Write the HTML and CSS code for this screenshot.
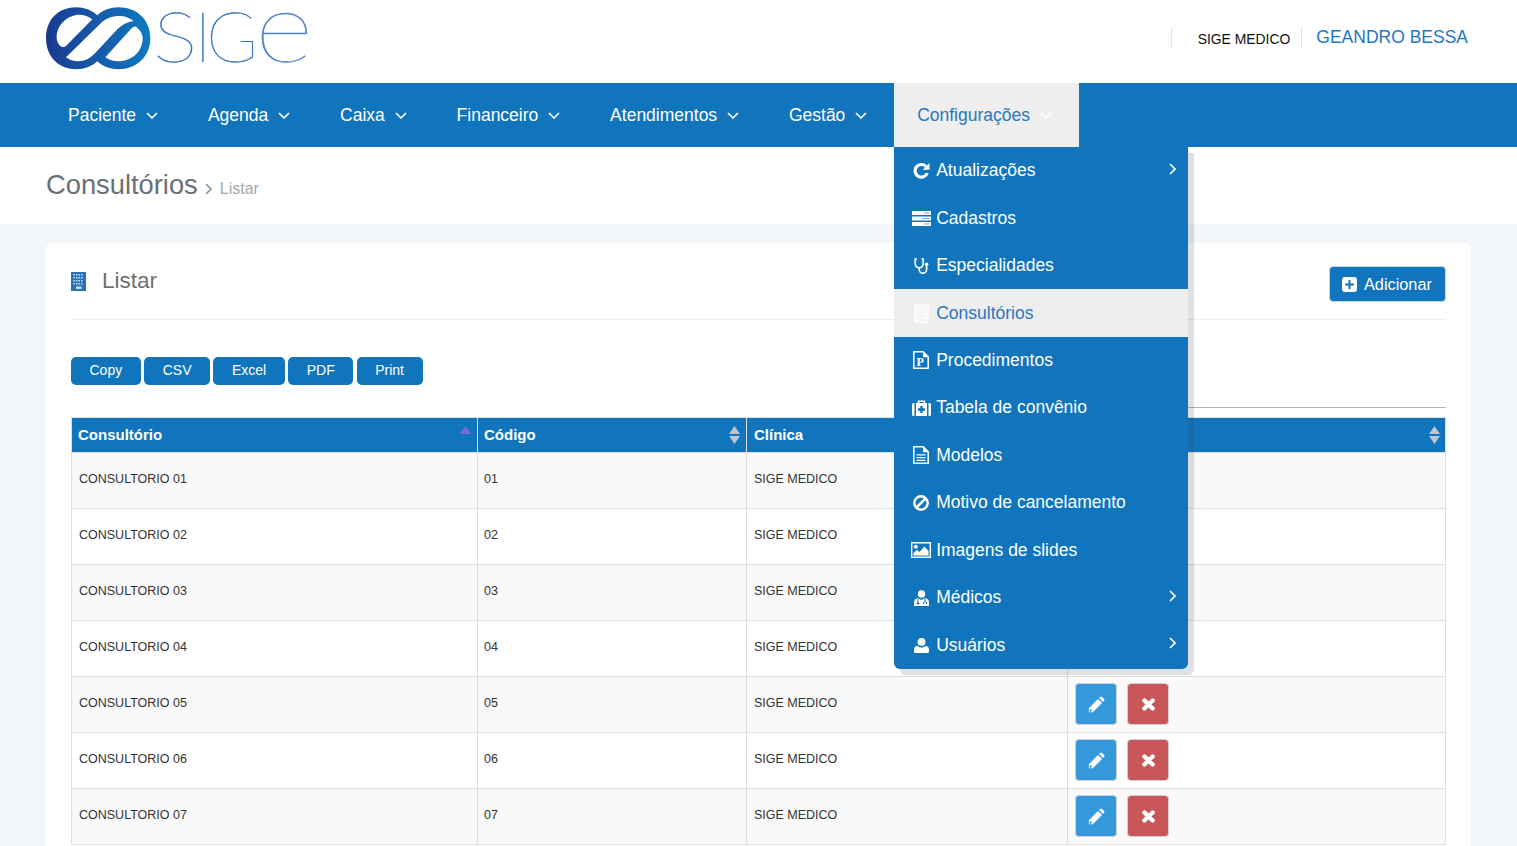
FILE: index.html
```html
<!DOCTYPE html>
<html lang="pt-BR">
<head>
<meta charset="utf-8">
<title>SIGE - Consultórios</title>
<link rel="stylesheet" href="styles.css">
</head>
<body>
<svg class="sprite" aria-hidden="true">
  <defs>
    <symbol id="i-pencil" viewBox="0 0 17 17">
      <path fill="#fff" d="M0.8 12.2 10 3l4 4-9.2 9.2H0.8zM11.1 1.9l.9-.9q1-1 2 0l2 2q1 1 0 2l-.9.9z"/>
      <path fill="#3498db" d="M2.2 12.9l1.9 1.9-.9.9H2l-.7-.7v-1.200z"/>
    </symbol>
    <symbol id="i-x" viewBox="0 0 13 13">
      <path stroke="#fff" stroke-width="4.200" stroke-linecap="round" d="M2.400 2.400l8.200 8.200M10.600 2.400l-8.200 8.200"/>
    </symbol>
    <symbol id="i-down" viewBox="0 0 12 7">
      <path fill="none" stroke="currentColor" stroke-width="1.700" d="M1 1l5 5 5-5"/>
    </symbol>
    <symbol id="i-right" viewBox="0 0 7 12">
      <path fill="none" stroke="currentColor" stroke-width="1.700" d="M1 1l5 5-5 5"/>
    </symbol>
    <symbol id="i-sort" viewBox="0 0 11 18">
      <path fill="#b9c7d6" d="M5.500 0L11 8H0zM5.500 18L0 10h11z"/>
    </symbol>
    <symbol id="i-building" viewBox="0 0 15 19">
      <path fill="currentColor" d="M0 0h15v19H0z"/>
      <path fill="var(--dot)" d="M2.500 2h1.500v1.500H2.500zM5 2h1.500v1.500H5zM7.500 2h1.500v1.500H7.500zM10 2h1.500v1.500H10zM2.500 5h1.500v1.500H2.500zM5 5h1.500v1.500H5zM7.500 5h1.500v1.500H7.500zM10 5h1.500v1.500H10zM2.500 8h1.500v1.500H2.500zM5 8h1.500v1.500H5zM7.500 8h1.500v1.500H7.500zM10 8h1.500v1.500H10zM2.500 11h1.500v1.500H2.500zM5 11h1.500v1.500H5zM7.500 11h1.500v1.500H7.500zM10 11h1.500v1.500H10zM5 14.500h5.500V17H5z"/>
    </symbol>
  </defs>
</svg>

<header class="topbar">
  <a class="logo" href="#">
    <svg class="logo-mark" viewBox="0 0 360 228" width="120" height="76" aria-hidden="true">
      <defs>
        <linearGradient id="logo-grad" x1="0" x2="1" y1="0" y2="0">
          <stop offset="0" stop-color="#1b3a92"/>
          <stop offset="1" stop-color="#0f7abf"/>
        </linearGradient>
      </defs>
      <path fill="url(#logo-grad)" fill-rule="evenodd" d="M110 22C132 22 155 30 172 46C188 30 212 22 235 22C290 22 331 58 331 115C331 170 290 208 235 208C212 208 188 200 172 184C155 200 132 208 110 208C55 208 18 170 18 115C18 58 55 22 110 22ZM50 108C52 72 85 44 118 44C132 44 147 50 157 58L78 138C72 143 64 142 58 135C52 128 49 118 50 108ZM78 172L180 72C195 56 215 48 240 48C255 48 270 54 281 63C262 66 245 74 232 88L165 160C150 175 135 184 115 184C100 184 88 180 78 172ZM196 172L270 90C276 82 284 78 288 80C300 90 308 100 308 115C308 155 275 184 235 184C220 184 207 180 196 172Z"/>
    </svg>
    <span class="logo-word"><span class="logo-s">S</span><span class="logo-i">I</span><span class="logo-g">G</span><span class="logo-e">e</span></span>
  </a>
  <div class="top-user">
    <span class="top-clinic">SIGE MEDICO</span>
    <a class="top-name" href="#">GEANDRO BESSA</a>
  </div>
</header>

<nav class="mainnav">
  <ul class="nav-list">
    <li class="nav-item"><a href="#">Paciente</a><svg class="caret"><use href="#i-down"/></svg></li>
    <li class="nav-item"><a href="#">Agenda</a><svg class="caret"><use href="#i-down"/></svg></li>
    <li class="nav-item"><a href="#">Caixa</a><svg class="caret"><use href="#i-down"/></svg></li>
    <li class="nav-item"><a href="#">Financeiro</a><svg class="caret"><use href="#i-down"/></svg></li>
    <li class="nav-item"><a href="#">Atendimentos</a><svg class="caret"><use href="#i-down"/></svg></li>
    <li class="nav-item"><a href="#">Gestão</a><svg class="caret"><use href="#i-down"/></svg></li>
    <li class="nav-item is-open"><a href="#">Configurações</a><svg class="caret"><use href="#i-down"/></svg>
      <ul class="dropdown">
        <li class="drop-item">
          <span class="drop-icon"><svg width="17" height="17" viewBox="0 0 17 17"><path fill="none" stroke="#fff" stroke-width="3.200" d="M14.300 11A6.300 6.300 0 1 1 12.800 4.300"/><path fill="#fff" d="M16.500 1v6.800H9.700z"/></svg></span>
          <span class="drop-text">Atualizações</span><svg class="drop-more"><use href="#i-right"/></svg>
        </li>
        <li class="drop-item">
          <span class="drop-icon"><svg width="19" height="15" viewBox="0 0 19 15"><path fill="#fff" d="M0 0h19v4H0zM0 5.500h19v4H0zM0 11h19v4H0z"/><path fill="#6fa9d6" d="M12 1.500h5.500v1H12zM10 7h7.500v1H10zM12 12.500h5.500v1H12z"/></svg></span>
          <span class="drop-text">Cadastros</span>
        </li>
        <li class="drop-item">
          <span class="drop-icon"><svg width="15" height="16" viewBox="0 0 15 16"><path fill="none" stroke="#fff" stroke-width="1.700" d="M3 1H1.200v4.800a4 4 0 0 0 8 0V1H7.400M5.200 10v1.500a3.700 3.700 0 0 0 7.400 0V8"/><circle cx="12.600" cy="6.300" r="1.800" fill="#fff"/></svg></span>
          <span class="drop-text">Especialidades</span>
        </li>
        <li class="drop-item is-active">
          <span class="drop-icon"><svg class="icon-building-pale" width="15" height="19"><use href="#i-building"/></svg></span>
          <span class="drop-text">Consultórios</span>
        </li>
        <li class="drop-item">
          <span class="drop-icon"><svg width="16" height="18" viewBox="0 0 16 18"><path fill="none" stroke="#fff" stroke-width="1.500" d="M.8.800h9.400l5 5v11.400H.8z"/><path fill="#fff" d="M10 .8v5.400h5.400z"/><text class="icon-letter" x="3.600" y="15">P</text></svg></span>
          <span class="drop-text">Procedimentos</span>
        </li>
        <li class="drop-item">
          <span class="drop-icon"><svg width="19" height="16" viewBox="0 0 19 16"><path fill="none" stroke="#fff" stroke-width="1.500" d="M6.500 3.500V1.300h6v2.200"/><path fill="#fff" d="M2.500 3H1.500Q0 3 0 4.500v10Q0 16 1.500 16h1zM4 3h11v13H4zM16.500 3h1Q19 3 19 4.500v10q0 1.500-1.500 1.500h-1z"/><path fill="#1075bc" d="M8.300 6h2.400v2.300H13v2.400h-2.300V13H8.300v-2.300H6V8.300h2.300z"/></svg></span>
          <span class="drop-text">Tabela de convênio</span>
        </li>
        <li class="drop-item">
          <span class="drop-icon"><svg width="16" height="18" viewBox="0 0 16 18"><path fill="none" stroke="#fff" stroke-width="1.500" d="M.8.800h9.400l5 5v11.400H.8z"/><path fill="#fff" d="M10 .8v5.400h5.400zM3.500 8.200h9v1.300h-9zM3.500 11h9v1.300h-9zM3.500 13.800h9v1.300h-9z"/></svg></span>
          <span class="drop-text">Modelos</span>
        </li>
        <li class="drop-item">
          <span class="drop-icon"><svg width="16" height="16" viewBox="0 0 16 16"><circle cx="8" cy="8" r="6.700" fill="none" stroke="#fff" stroke-width="2.500"/><path stroke="#fff" stroke-width="2.500" d="M3.500 12.500l9-9"/></svg></span>
          <span class="drop-text">Motivo de cancelamento</span>
        </li>
        <li class="drop-item">
          <span class="drop-icon"><svg width="20" height="16" viewBox="0 0 20 16"><path fill="none" stroke="#fff" stroke-width="1.400" d="M.7.700h18.600v14.600H.7z"/><circle cx="4.800" cy="4.800" r="2" fill="#fff"/><path fill="#fff" d="M2.500 13.500V11l3.500-3 2.500 2 5-5.500 4 4.500v4.500z"/></svg></span>
          <span class="drop-text">Imagens de slides</span>
        </li>
        <li class="drop-item">
          <span class="drop-icon"><svg width="15" height="16" viewBox="0 0 15 16"><circle cx="7.500" cy="4" r="3.700" fill="#fff"/><path fill="#fff" d="M0 16v-3.500Q0 8.500 4 8.200L7.500 10 11 8.200q4 .3 4 4.300V16z"/><path fill="none" stroke="#1075bc" stroke-width="1" d="M4 9v3M11 9v2.500M9.500 14v-1.500q1.500-1.500 3 0V14"/><circle cx="4" cy="13.200" r="1.200" fill="#1075bc"/></svg></span>
          <span class="drop-text">Médicos</span><svg class="drop-more"><use href="#i-right"/></svg>
        </li>
        <li class="drop-item">
          <span class="drop-icon"><svg width="15" height="15" viewBox="0 0 15 15"><circle cx="7.500" cy="3.900" r="3.900" fill="#fff"/><path fill="#fff" d="M0 13.500V12Q0 8 3.500 8q1.800 1.500 4 1.500t4-1.500Q15 8 15 12v1.500q0 1.500-1.500 1.500h-12Q0 15 0 13.500z"/></svg></span>
          <span class="drop-text">Usuários</span><svg class="drop-more"><use href="#i-right"/></svg>
        </li>
      </ul>
    </li>
  </ul>
</nav>

<div class="subheader">
  <h1 class="page-title">Consultórios</h1>
  <svg class="crumb-sep"><use href="#i-right"/></svg>
  <span class="crumb">Listar</span>
</div>

<main class="content">
  <section class="card">
    <div class="card-head">
      <div class="card-title">
        <svg class="icon-building" width="15" height="19"><use href="#i-building"/></svg>
        <h2>Listar</h2>
      </div>
      <a class="btn-add" href="#">
        <svg width="15" height="15" viewBox="0 0 15 15"><rect width="15" height="15" rx="3" fill="#fff"/><path fill="#1075bc" d="M6.500 3h2v3.500H12v2H8.500V12h-2V8.500H3v-2h3.500z"/></svg>
        Adicionar
      </a>
    </div>

    <div class="toolbar">
      <div class="export-group">
        <button class="btn-export">Copy</button>
        <button class="btn-export">CSV</button>
        <button class="btn-export">Excel</button>
        <button class="btn-export">PDF</button>
        <button class="btn-export">Print</button>
      </div>
      <div class="filter-line"></div>
    </div>

    <table class="grid">
      <colgroup>
        <col class="col-a"><col class="col-b"><col class="col-c"><col class="col-d">
      </colgroup>
      <thead>
        <tr>
          <th>Consultório<svg class="sort sort-up" viewBox="0 0 11 8"><path fill="#7a6fd1" d="M5.500 0L11 8H0z"/></svg></th>
          <th>Código<svg class="sort"><use href="#i-sort"/></svg></th>
          <th>Clínica<svg class="sort"><use href="#i-sort"/></svg></th>
          <th>Ações<svg class="sort"><use href="#i-sort"/></svg></th>
        </tr>
      </thead>
      <tbody>
        <tr><td>CONSULTORIO 01</td><td>01</td><td>SIGE MEDICO</td><td class="actions"><a class="act act-edit" href="#"><svg width="17" height="17"><use href="#i-pencil"/></svg></a><a class="act act-del" href="#"><svg width="13" height="13"><use href="#i-x"/></svg></a></td></tr>
        <tr><td>CONSULTORIO 02</td><td>02</td><td>SIGE MEDICO</td><td class="actions"><a class="act act-edit" href="#"><svg width="17" height="17"><use href="#i-pencil"/></svg></a><a class="act act-del" href="#"><svg width="13" height="13"><use href="#i-x"/></svg></a></td></tr>
        <tr><td>CONSULTORIO 03</td><td>03</td><td>SIGE MEDICO</td><td class="actions"><a class="act act-edit" href="#"><svg width="17" height="17"><use href="#i-pencil"/></svg></a><a class="act act-del" href="#"><svg width="13" height="13"><use href="#i-x"/></svg></a></td></tr>
        <tr><td>CONSULTORIO 04</td><td>04</td><td>SIGE MEDICO</td><td class="actions"><a class="act act-edit" href="#"><svg width="17" height="17"><use href="#i-pencil"/></svg></a><a class="act act-del" href="#"><svg width="13" height="13"><use href="#i-x"/></svg></a></td></tr>
        <tr><td>CONSULTORIO 05</td><td>05</td><td>SIGE MEDICO</td><td class="actions"><a class="act act-edit" href="#"><svg width="17" height="17"><use href="#i-pencil"/></svg></a><a class="act act-del" href="#"><svg width="13" height="13"><use href="#i-x"/></svg></a></td></tr>
        <tr><td>CONSULTORIO 06</td><td>06</td><td>SIGE MEDICO</td><td class="actions"><a class="act act-edit" href="#"><svg width="17" height="17"><use href="#i-pencil"/></svg></a><a class="act act-del" href="#"><svg width="13" height="13"><use href="#i-x"/></svg></a></td></tr>
        <tr><td>CONSULTORIO 07</td><td>07</td><td>SIGE MEDICO</td><td class="actions"><a class="act act-edit" href="#"><svg width="17" height="17"><use href="#i-pencil"/></svg></a><a class="act act-del" href="#"><svg width="13" height="13"><use href="#i-x"/></svg></a></td></tr>
      </tbody>
    </table>
  </section>
</main>
</body>
</html>
```

FILE: styles.css
```css
* { box-sizing: border-box; }
html, body { margin: 0; padding: 0; height: 846px; overflow: hidden; }
body {
  display: flex;
  flex-direction: column;
  font-family: "Liberation Sans", Arial, sans-serif;
  background: #f2f6fb;
  color: #333;
}
a { color: inherit; text-decoration: none; }
ul { list-style: none; margin: 0; padding: 0; }
.sprite { width: 0; height: 0; position: absolute; }

/* top bar */
.topbar {
  height: 83px;
  flex: none;
  background: #fff;
  display: flex;
  justify-content: space-between;
  padding: 0 49px 0 40px;
}
.logo { display: flex; align-items: flex-start; }
.logo-mark { flex: none; }
.logo-word {
  font-family: Lato, "Liberation Sans", sans-serif;
  font-weight: 100;
  font-size: 70px;
  line-height: 48px;
  margin-left: -6.8px;
  color: #2f6dbc;
  -webkit-text-stroke: 0.4px #2f6dbc;
  white-space: nowrap;
}
.logo-s, .logo-i, .logo-g, .logo-e { display: inline-block; }
.logo-s { transform: scaleX(1.2); transform-origin: left; margin-right: 4px; }
.logo-i { margin-right: -5px; }
.logo-g { margin-right: -3px; }
.logo-e {
  font-size: 98px;
  transform: scaleX(1.15);
  transform-origin: left;
  color: #4c82cc;
  -webkit-text-stroke-color: #4c82cc;
}
.top-user { display: flex; align-items: flex-start; padding-top: 27px; }
.top-clinic {
  height: 22px;
  padding: 5px 11px 0 26px;
  border-left: 1px solid #e4e4e4;
  border-right: 1px solid #e4e4e4;
  font-size: 13.9px;
  line-height: 14px;
  color: #111;
}
.top-name {
  margin-left: 14px;
  font-size: 17.5px;
  line-height: 20px;
  color: #1f77c3;
}

/* main nav */
.mainnav {
  height: 64px;
  flex: none;
  background: #1075bc;
  padding-left: 45px;
  position: relative;
  z-index: 5;
}
.nav-list { display: flex; height: 64px; }
.nav-item {
  display: flex;
  align-items: center;
  gap: 10px;
  padding: 0 26.8px 0 23px;
  color: #fff;
  font-size: 17.5px;
  position: relative;
}
.caret { width: 12px; height: 7px; flex: none; margin-top: 1px; }
.is-open { background: #eee; color: #2a78bf; }
.is-open .caret { color: #fff; }

.dropdown {
  position: absolute;
  top: 64px;
  left: 0;
  width: 294px;
  background: #1075bc;
  border-radius: 0 0 6px 6px;
  box-shadow: 6px 6px 0 rgba(50, 60, 90, 0.16);
}
.drop-item {
  height: 47.45px;
  display: flex;
  align-items: center;
  padding-left: 15px;
  color: #fff;
  font-size: 17.5px;
  position: relative;
}
.drop-icon {
  width: 24px;
  height: 20px;
  margin-right: 3px;
  display: flex;
  align-items: center;
  justify-content: center;
  flex: none;
}
.drop-more { position: absolute; right: 12px; top: 16px; width: 7px; height: 12px; }
.is-active { background: #eee; color: #2a78bf; }
.icon-letter {
  font-family: "Liberation Serif", serif;
  font-weight: 700;
  font-size: 12px;
  fill: #fff;
}
.icon-building-pale { color: #fafafa; --dot: #f0f0f0; }
.icon-building { color: #2a71bd; --dot: #cfe0f2; flex: none; }

/* sub header */
.subheader {
  height: 77px;
  flex: none;
  background: #fff;
  display: flex;
  align-items: center;
  padding: 1px 46px 0;
}
.page-title { margin: 0; font-size: 27.3px; font-weight: 400; color: #6b7076; line-height: 1; padding-bottom: 2px; }
.crumb-sep { width: 7px; height: 12px; margin: 6px 8px 0 7px; color: #8d939a; }
.crumb { font-size: 16px; color: #a3a8ae; margin-top: 5px; }

/* card */
.content { flex: 1; padding: 19px 46px 0; min-height: 0; }
.card {
  height: 100%;
  background: #fff;
  border-radius: 6px 6px 0 0;
  padding: 0 25px;
}
.card-head {
  height: 77px;
  border-bottom: 1px solid #ebedf0;
  display: flex;
  justify-content: space-between;
}
.card-title { display: flex; align-items: center; gap: 16px; }
.card-title h2 { margin: 0; font-size: 22.5px; font-weight: 400; color: #6c6f73; line-height: 1; }
.icon-building { margin-top: 1px; }
.btn-add {
  margin-top: 23px;
  height: 36px;
  width: 117px;
  display: flex;
  align-items: center;
  gap: 7px;
  padding-left: 12px;
  background: #1075bc;
  border: 1px solid #c9d3dc;
  border-radius: 4px;
  color: #fff;
  font-size: 16.3px;
}

.toolbar {
  margin-top: 37px;
  height: 51px;
  display: flex;
  justify-content: space-between;
  align-items: flex-start;
}
.export-group { display: flex; gap: 3.5px; }
.btn-export {
  height: 28px;
  padding: 0 18.5px 3px;
  border: 0;
  border-radius: 5px;
  background: #1075bc;
  color: #fff;
  font: 14px "Liberation Sans", Arial, sans-serif;
}
.filter-line { width: 300px; height: 51px; border-bottom: 1px solid #b3b3b3; }

/* table */
.grid {
  margin-top: 9px;
  width: 1375px;
  table-layout: fixed;
  border-collapse: separate;
  border-spacing: 0;
}
.col-a { width: 407px; }
.col-b { width: 269px; }
.col-c { width: 321px; }
.col-d { width: 378px; }
.grid th {
  height: 36px;
  background: #1075bc;
  color: #fff;
  font-size: 15px;
  font-weight: 700;
  text-align: left;
  padding: 0 6px 2px;
  border-top: 1px solid #ddd;
  border-bottom: 1px solid #ddd;
  border-right: 1px solid #ddd;
  position: relative;
}
.grid th:nth-child(3) { padding-left: 7px; }
.grid td {
  height: 56px;
  padding: 0 6px 3px 7px;
  font-size: 12.5px;
  color: #333;
  border-bottom: 1px solid #ddd;
  border-right: 1px solid #ddd;
  vertical-align: middle;
}
.grid td:nth-child(2) { padding-left: 6px; }
.grid th:first-child, .grid td:first-child { border-left: 1px solid #ddd; }
.grid tbody tr:nth-child(odd) td { background: #f9f9f9; }
.grid tbody tr:nth-child(even) td { background: #fff; }

.sort { position: absolute; right: 6px; top: 8px; width: 11px; height: 18px; }
.grid th:last-child .sort { right: 5px; }
.sort-up { height: 8px; }

.grid td.actions { padding: 6px 7px 7px; vertical-align: top; font-size: 0; line-height: 0; white-space: nowrap; }
.act {
  display: inline-flex;
  vertical-align: top;
  width: 42px;
  height: 42px;
  align-items: center;
  justify-content: center;
  border-radius: 4px;
  border: 1px solid #cfcfcf;
  margin-right: 10px;
}
.act-edit { background: #3498db; }
.act-del { background: #c9575a; }
```
